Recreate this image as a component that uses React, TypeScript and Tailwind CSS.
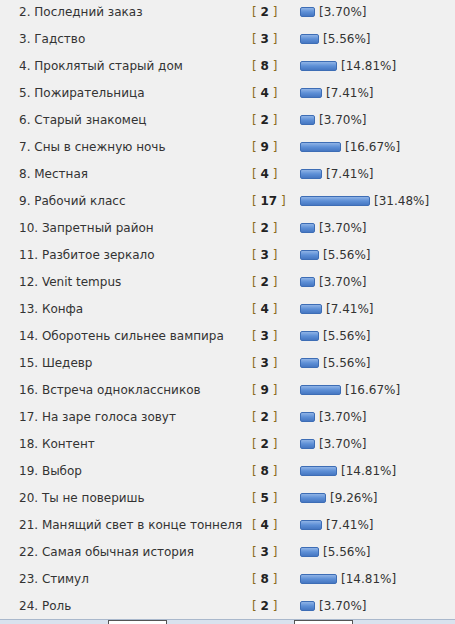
import React from 'react';

const rows: [string, number, string][] = [
  ['2. Последний заказ', 2, '3.70'],
  ['3. Гадство', 3, '5.56'],
  ['4. Проклятый старый дом', 8, '14.81'],
  ['5. Пожирательница', 4, '7.41'],
  ['6. Старый знакомец', 2, '3.70'],
  ['7. Сны в снежную ночь', 9, '16.67'],
  ['8. Местная', 4, '7.41'],
  ['9. Рабочий класс', 17, '31.48'],
  ['10. Запретный район', 2, '3.70'],
  ['11. Разбитое зеркало', 3, '5.56'],
  ['12. Venit tempus', 2, '3.70'],
  ['13. Конфа', 4, '7.41'],
  ['14. Оборотень сильнее вампира', 3, '5.56'],
  ['15. Шедевр', 3, '5.56'],
  ['16. Встреча одноклассников', 9, '16.67'],
  ['17. На заре голоса зовут', 2, '3.70'],
  ['18. Контент', 2, '3.70'],
  ['19. Выбор', 8, '14.81'],
  ['20. Ты не поверишь', 5, '9.26'],
  ['21. Манящий свет в конце тоннеля', 4, '7.41'],
  ['22. Самая обычная история', 3, '5.56'],
  ['23. Стимул', 8, '14.81'],
  ['24. Роль', 2, '3.70'],
];

function Bar({ pct }: { pct: number }) {
  // bar image is roughly 2px per percent plus its rounded ends
  const width = Math.round(pct * 2 + 7.5);
  return (
    <span
      className="inline-block h-[10px] rounded-[2px] border border-[#3d6db5] bg-gradient-to-b from-[#8fb3e6] via-[#5d8fd6] to-[#4677c2]"
      style={{ width }}
    />
  );
}

export default function App() {
  return (
    <div className="flex h-[624px] w-[455px] flex-col overflow-hidden bg-[#f0f0f0] font-['DejaVu_Sans',sans-serif] text-[12px] text-[#333]">
      <div className="-mt-[2px] flex flex-col">
        {rows.map(([title, votes, pct]) => (
          <div key={title} className="flex h-[27px] items-center">
            <div className="w-[252px] pl-[19px] whitespace-nowrap">{title}</div>
            <div className="w-[48px] text-[#8a6a1c]">
              [ <b className="text-[#222]">{votes}</b> ]
            </div>
            <div className="flex items-center gap-[4px]">
              <Bar pct={parseFloat(pct)} />
              <span>[{pct}%]</span>
            </div>
          </div>
        ))}
      </div>
      <div className="mt-auto flex h-[5px] border-t border-[#a9b8cc] bg-[#d9e2ee]">
        <div className="w-[108px]" />
        <div className="w-[59px] border-x border-t border-[#555] bg-white" />
        <div className="w-[127px]" />
        <div className="w-[59px] border-x border-t border-[#555] bg-white" />
      </div>
    </div>
  );
}
